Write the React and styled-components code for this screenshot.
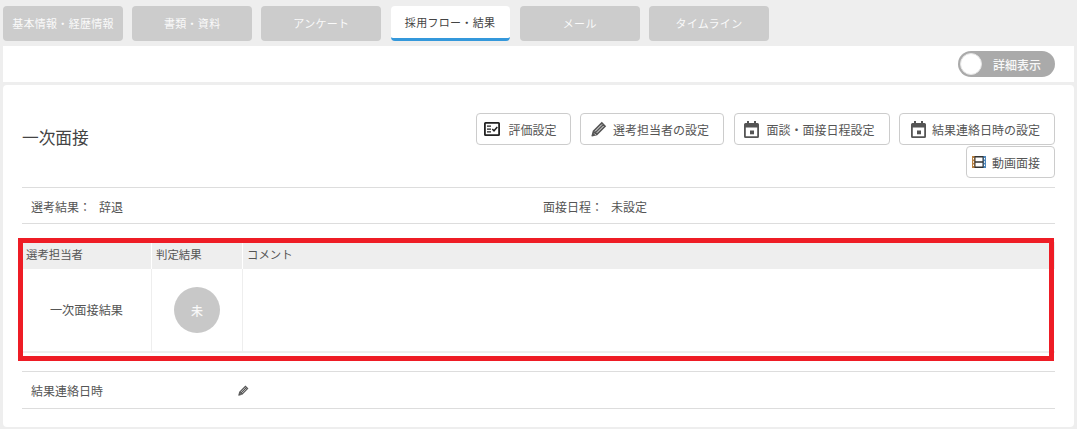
import React from "react";
import styled, { createGlobalStyle } from "styled-components";

const Global = createGlobalStyle`
  html, body { margin: 0; padding: 0; background: #eeeeee; }
  body { font-family: "Noto Sans CJK JP", "Noto Sans", sans-serif; font-size: 12px; color: #555; }
`;
const Page = styled.div`width: 1077px; height: 429px; overflow: hidden; padding: 6px 3px 0 3px; box-sizing: border-box;`;
const Tabs = styled.div`display: flex; gap: 9.2px; height: 35px;`;
const Tab = styled.div`
  width: ${p => p.$active ? 119 : 120}px; margin-right: ${p => p.$active ? 1 : 0}px; height: 35px; box-sizing: border-box; border-radius: 4px;
  display: flex; align-items: center; justify-content: center;
  font-size: 11px; letter-spacing: .3px;
  padding-bottom: ${p => p.$active ? 0 : 2}px;
  background: ${p => p.$active ? "#fff" : "#cccccc"};
  color: ${p => p.$active ? "#444" : "#fafafa"};
  border-bottom: ${p => p.$active ? "3px solid #3498db" : "none"};
`;
const ToggleBar = styled.div`
  margin-top: 5px; height: 36px; background: #fff; display: flex; align-items: center; justify-content: flex-end;
  padding-right: 19px;
`;
const Toggle = styled.div`
  width: 97px; height: 26px; box-sizing: border-box; border-radius: 13px; background: #aaaaaa; padding: 2px 14px 2px 2px;
  display: flex; align-items: center; justify-content: space-between; color: #f8f8f8; font-size: 12px; font-weight: 500;
`;
const Knob = styled.span`width: 22px; height: 22px; box-sizing: border-box; border-radius: 50%; background: #fff; border: 1px solid #e4e4e4; display: block;`;
const Card = styled.section`
  position: relative; margin-top: 3px; height: 342px; box-sizing: border-box; background: #fff; border-radius: 4px;
  padding: 28px 19px 0 19px;
`;
const Head = styled.div`display: flex; justify-content: space-between; align-items: flex-start; height: 74px; border-bottom: 1px solid #ddd;`;
const Title = styled.h2`margin: 10px 0 0 0; font-size: 16.7px; font-weight: 400; color: #444; line-height: 28px;`;
const Buttons = styled.div`display: flex; flex-wrap: wrap; justify-content: flex-end; align-content: flex-start; column-gap: 9.5px; row-gap: 1px; width: 590px;`;
const Btn = styled.button`
  height: 32px; box-sizing: border-box; width: ${p => p.$w}px; padding: 0 ${p => p.$pr ?? 14}px 0 0; background: #fff; border: 1px solid #ccc; border-radius: 4px;
  display: inline-flex; align-items: center; justify-content: flex-end; gap: ${p => p.$gap}px;
  font: inherit; font-size: 12px; color: #555;
  svg { flex: none; }
`;
const Info = styled.div`display: flex; align-items: center; border-bottom: 1px solid #ddd; padding: 1px 0 0 9px; box-sizing: border-box; height: 36px;`;
const InfoCell = styled.div`width: ${p => p.$w ? p.$w + "px" : "auto"}; display: flex; gap: 8px;`;
const Table = styled.div`margin-top: 18px; height: 111px; box-sizing: border-box; display: grid; grid-template-columns: 130px 91px 1fr; grid-template-rows: 27px 1fr; border-bottom: 2px solid #eee;`;
const Th = styled.div`background: #eeeeee; border-right: 1px solid ${p => p.$last ? "transparent" : "#fff"}; padding-left: 4px; font-size: 11.4px; line-height: 25px;`;
const Td = styled.div`
  border-right: 1px solid ${p => p.$last ? "transparent" : "#eee"};
  display: flex; align-items: center; justify-content: center; font-size: 12.2px;
`;
const Badge = styled.div`width: 46px; height: 46px; border-radius: 50%; background: #c8c8c8; color: #f8f8f8; display: flex; align-items: center; justify-content: center; font-size: 12px; font-weight: 500;`;
const Highlight = styled.div`position: absolute; left: 15px; top: 153px; width: 1036px; height: 123px; box-sizing: border-box; border: 5px solid #ee1c25; pointer-events: none;`;
const Contact = styled.div`
  margin-top: 18px; height: 36px; border-top: 1px solid #ddd; border-bottom: 1px solid #ddd; display: flex; align-items: center; padding-left: 9px;
`;
const ContactLabel = styled.div`width: 207px;`;

const Fact = () => (
  <svg width="16" height="14" viewBox="0 0 16 14">
    <path fillRule="evenodd" fill="#222" d="M1.5 0h13A1.5 1.5 0 0 1 16 1.5v11a1.5 1.5 0 0 1-1.5 1.500h-13A1.500 1.500 0 0 1 0 12.500v-11A1.500 1.500 0 0 1 1.500 0zM1.800 1.800v10.400h12.400V1.800z" />
    <path fill="#222" d="M3 3.500h4v1.300H3zM3 6.400h4v1.300H3zM3 9.300h4v1.300H3z" />
    <path fill="none" stroke="#222" strokeWidth="1.500" d="M8.300 7l1.700 1.800L13.300 5" />
  </svg>
);
const Pencil = ({ s = 16 }) => (
  <svg width={s} height={s} viewBox="0 0 16 16">
    <path fill="#555" d="M10.800.8l4.400 4.400-9 9L1 15.600l-.6-.6L1.800 9.800z" />
    <path stroke="#fff" strokeWidth=".9" fill="none" d="M4 10.400L11 3.400M5.800 11.800L12.600 5M3.400 12.600L4.600 13.800" />
  </svg>
);
const Calendar = () => (
  <svg width="15" height="17" viewBox="0 0 15 17">
    <path fillRule="evenodd" fill="#555" d="M3 0h2v2h5V0h2v2h1.500A1.500 1.500 0 0 1 15 3.500v12a1.500 1.500 0 0 1-1.500 1.500h-12A1.500 1.500 0 0 1 0 15.500v-12A1.500 1.500 0 0 1 1.500 2H3zM1.800 6.500v8.700h11.400V6.500z" />
    <path fill="#555" d="M6 9.500h4v3.800H6z" />
  </svg>
);
const Film = () => (
  <svg width="14" height="12" viewBox="0 0 14 12">
    <path fill="#333" d="M3 0h8v1.500H3zM3 5.200h8v1.500H3zM3 10.500h8V12H3z" />
    <path fill="#b9803f" d="M0 0h3v12H0z" />
    <path fill="#4b87bf" d="M11 0h3v12h-3z" />
    <path fill="#fff" d="M1 2h1v1.500H1zM1 5.200h1v1.500H1zM1 8.500h1V10H1zM12 2h1v1.500h-1zM12 5.200h1v1.500h-1zM12 8.500h1V10h-1z" />
    <path fill="#333" d="M2.500 0H3.500v12H2.500zM10.500 0h1v12h-1z" />
  </svg>
);

export default function App() {
  return (
    <Page>
      <Global />
      <Tabs>
        <Tab>基本情報・経歴情報</Tab>
        <Tab>書類・資料</Tab>
        <Tab>アンケート</Tab>
        <Tab $active>採用フロー・結果</Tab>
        <Tab>メール</Tab>
        <Tab>タイムライン</Tab>
      </Tabs>
      <ToggleBar>
        <Toggle><Knob />詳細表示</Toggle>
      </ToggleBar>
      <Card>
        <Head>
          <Title>一次面接</Title>
          <Buttons>
            <Btn $w={95} $gap={8} $pr={13}><Fact />評価設定</Btn>
            <Btn $w={144} $gap={6}><Pencil />選考担当者の設定</Btn>
            <Btn $w={156} $gap={7}><Calendar />面談・面接日程設定</Btn>
            <Btn $w={156} $gap={6}><Calendar />結果連絡日時の設定</Btn>
            <Btn $w={89} $gap={6}><Film />動画面接</Btn>
          </Buttons>
        </Head>
        <Info>
          <InfoCell $w={512}><span>選考結果：</span><span>辞退</span></InfoCell>
          <InfoCell><span>面接日程：</span><span>未設定</span></InfoCell>
        </Info>
        <Table>
          <Th>選考担当者</Th><Th>判定結果</Th><Th $last>コメント</Th>
          <Td>一次面接結果</Td><Td><Badge>未</Badge></Td><Td $last />
        </Table>
        <Contact>
          <ContactLabel>結果連絡日時</ContactLabel>
          <Pencil s={11} />
        </Contact>
        <Highlight />
      </Card>
    </Page>
  );
}
